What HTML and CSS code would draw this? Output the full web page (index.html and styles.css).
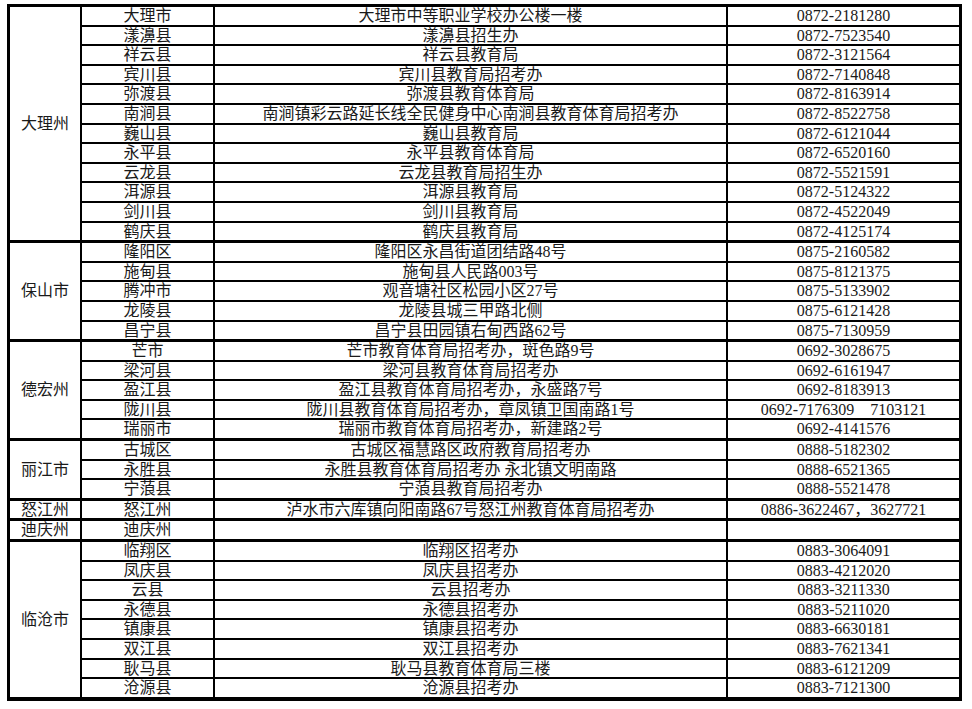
FILE: index.html
```html
<!DOCTYPE html>
<html lang="zh-CN">
<head>
<meta charset="utf-8">
<title>招考办联系方式</title>
<link rel="stylesheet" href="styles.css">
</head>
<body>
<table class="sheet">
<colgroup>
<col class="c-region"><col class="c-county"><col class="c-addr"><col class="c-phone">
</colgroup>
<tbody>
<tr><td class="region" rowspan="12">大理州</td><td>大理市</td><td>大理市中等职业学校办公楼一楼</td><td>0872-2181280</td></tr>
<tr><td>漾濞县</td><td>漾濞县招生办</td><td>0872-7523540</td></tr>
<tr><td>祥云县</td><td>祥云县教育局</td><td>0872-3121564</td></tr>
<tr><td>宾川县</td><td>宾川县教育局招考办</td><td>0872-7140848</td></tr>
<tr><td>弥渡县</td><td>弥渡县教育体育局</td><td>0872-8163914</td></tr>
<tr><td>南涧县</td><td>南涧镇彩云路延长线全民健身中心南涧县教育体育局招考办</td><td>0872-8522758</td></tr>
<tr><td>巍山县</td><td>巍山县教育局</td><td>0872-6121044</td></tr>
<tr><td>永平县</td><td>永平县教育体育局</td><td>0872-6520160</td></tr>
<tr><td>云龙县</td><td>云龙县教育局招生办</td><td>0872-5521591</td></tr>
<tr><td>洱源县</td><td>洱源县教育局</td><td>0872-5124322</td></tr>
<tr><td>剑川县</td><td>剑川县教育局</td><td>0872-4522049</td></tr>
<tr class="end"><td>鹤庆县</td><td>鹤庆县教育局</td><td>0872-4125174</td></tr>

<tr><td class="region" rowspan="5">保山市</td><td>隆阳区</td><td>隆阳区永昌街道团结路48号</td><td>0875-2160582</td></tr>
<tr><td>施甸县</td><td>施甸县人民路003号</td><td>0875-8121375</td></tr>
<tr><td>腾冲市</td><td>观音塘社区松园小区27号</td><td>0875-5133902</td></tr>
<tr><td>龙陵县</td><td>龙陵县城三甲路北侧</td><td>0875-6121428</td></tr>
<tr class="end"><td>昌宁县</td><td>昌宁县田园镇右甸西路62号</td><td>0875-7130959</td></tr>

<tr><td class="region" rowspan="5">德宏州</td><td>芒市</td><td>芒市教育体育局招考办，斑色路9号</td><td>0692-3028675</td></tr>
<tr><td>梁河县</td><td>梁河县教育体育局招考办</td><td>0692-6161947</td></tr>
<tr><td>盈江县</td><td>盈江县教育体育局招考办，永盛路7号</td><td>0692-8183913</td></tr>
<tr><td>陇川县</td><td>陇川县教育体育局招考办，章凤镇卫国南路1号</td><td>0692-7176309　7103121</td></tr>
<tr class="end"><td>瑞丽市</td><td>瑞丽市教育体育局招考办，新建路2号</td><td>0692-4141576</td></tr>

<tr><td class="region" rowspan="3">丽江市</td><td>古城区</td><td>古城区福慧路区政府教育局招考办</td><td>0888-5182302</td></tr>
<tr><td>永胜县</td><td>永胜县教育体育局招考办 永北镇文明南路</td><td>0888-6521365</td></tr>
<tr class="end"><td>宁蒗县</td><td>宁蒗县教育局招考办</td><td>0888-5521478</td></tr>

<tr class="end"><td class="region">怒江州</td><td>怒江州</td><td>泸水市六库镇向阳南路67号怒江州教育体育局招考办</td><td>0886-3622467，3627721</td></tr>

<tr class="end"><td class="region">迪庆州</td><td>迪庆州</td><td></td><td></td></tr>

<tr><td class="region region-last" rowspan="8">临沧市</td><td>临翔区</td><td>临翔区招考办</td><td>0883-3064091</td></tr>
<tr><td>凤庆县</td><td>凤庆县招考办</td><td>0883-4212020</td></tr>
<tr><td>云县</td><td>云县招考办</td><td>0883-3211330</td></tr>
<tr><td>永德县</td><td>永德县招考办</td><td>0883-5211020</td></tr>
<tr><td>镇康县</td><td>镇康县招考办</td><td>0883-6630181</td></tr>
<tr><td>双江县</td><td>双江县招考办</td><td>0883-7621341</td></tr>
<tr><td>耿马县</td><td>耿马县教育体育局三楼</td><td>0883-6121209</td></tr>
<tr class="last"><td>沧源县</td><td>沧源县招考办</td><td>0883-7121300</td></tr>
</tbody>
</table>
</body>
</html>
```
FILE: styles.css
```css
html, body {
  margin: 0;
  padding: 0;
  background: #fff;
}

.sheet {
  margin: 4px 0 0 7px;
  width: 955px;
  table-layout: fixed;
  border-collapse: separate;
  border-spacing: 0;
  border-top: 3px solid #000;
  border-left: 3px solid #000;
  font-family: "Liberation Serif", "Noto Sans CJK SC", serif;
  font-size: 16px;
  color: #1a1a1a;
}

.c-region { width: 72px; }
.c-county { width: 133px; }
.c-addr { width: 513px; }
.c-phone { width: 234px; }

.sheet td {
  padding: 0;
  height: 17.6px;
  line-height: 17.6px;
  text-align: center;
  vertical-align: bottom;
  white-space: nowrap;
  overflow: hidden;
  border-right: 2px solid #000;
  border-bottom: 2px solid #000;
}

.sheet td:last-child {
  border-right-width: 3px;
}

.sheet td.region {
  vertical-align: middle;
  border-bottom-width: 3px;
}

.sheet tr.end td {
  border-bottom-width: 3px;
}

.sheet tr.last td,
.sheet td.region-last {
  border-bottom-width: 4px;
}
```
